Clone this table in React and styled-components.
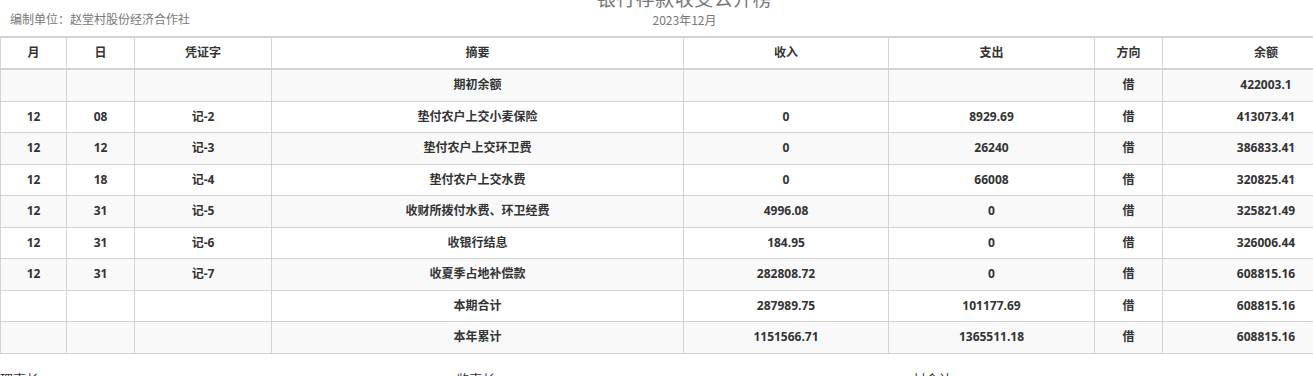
import styled, { createGlobalStyle } from 'styled-components';

const GlobalStyle = createGlobalStyle`
  body {
    margin: 0;
    background: #fff;
    overflow: hidden;
    font-family: "Open Sans", "Noto Sans CJK SC", sans-serif;
    color: #333;
  }
`;

// 页面比窗口宽一些，右边会被裁掉
const Page = styled.div`
  width: 1369px;
`;

const Header = styled.div`
  display: grid;
  grid-template-columns: 1fr auto 1fr;
  align-items: end;
  height: 36px;
`;

const Unit = styled.div`
  padding: 0 0 9px 10px;
  font-size: 12px;
  line-height: 16px;
  color: #777;
  font-family: "Noto Sans CJK SC", sans-serif;
`;

const TitleBox = styled.div`
  display: flex;
  flex-direction: column;
  align-items: center;
  align-self: start;
  margin-top: -14px;
`;

const Title = styled.div`
  font-size: 19px;
  line-height: 24px;
  color: #777;
  letter-spacing: 0.5px;
  font-family: "Noto Sans CJK SC", sans-serif;
`;

const SubTitle = styled.div`
  margin-top: 2px;
  font-size: 12px;
  line-height: 16px;
  color: #777;
  font-family: "Noto Sans CJK SC", sans-serif;
`;

const Table = styled.table`
  width: 1369px;
  table-layout: fixed;
  border-collapse: collapse;
  font-size: 12px;
`;

const Th = styled.th`
  padding: 7px 8px 8px;
  line-height: 15px;
  font-weight: bold;
  color: #333;
  text-align: center;
  border: 1px solid #d3d3d3;
  border-top-width: 2px;
  border-bottom-width: 2px;
`;

const Tr = styled.tr`
  background: ${(props) => (props.striped ? '#f9f9f9' : '#fff')};
`;

const Td = styled.td`
  padding: 8px 8px;
  height: 14.5px;
  line-height: 14.5px;
  font-weight: bold;
  color: #333;
  text-align: center;
  border: 1px solid #d3d3d3;
  white-space: nowrap;
`;

const Signs = styled.div`
  display: grid;
  grid-template-columns: repeat(3, 1fr);
  margin-top: 16px;
  font-size: 13px;
  line-height: 18px;
  color: #333;
  font-family: "Noto Sans CJK SC", sans-serif;
`;

const Sign = styled.div`
  padding-left: ${(props) => props.pad || 0}px;
`;

const widths = [66, 68, 137, 412, 205, 206, 68, 207];
const heads = ['月', '日', '凭证字', '摘要', '收入', '支出', '方向', '余额'];

const rows = [
  ['', '', '', '期初余额', '', '', '借', '422003.1'],
  ['12', '08', '记-2', '垫付农户上交小麦保险', '0', '8929.69', '借', '413073.41'],
  ['12', '12', '记-3', '垫付农户上交环卫费', '0', '26240', '借', '386833.41'],
  ['12', '18', '记-4', '垫付农户上交水费', '0', '66008', '借', '320825.41'],
  ['12', '31', '记-5', '收财所拨付水费、环卫经费', '4996.08', '0', '借', '325821.49'],
  ['12', '31', '记-6', '收银行结息', '184.95', '0', '借', '326006.44'],
  ['12', '31', '记-7', '收夏季占地补偿款', '282808.72', '0', '借', '608815.16'],
  ['', '', '', '本期合计', '287989.75', '101177.69', '借', '608815.16'],
  ['', '', '', '本年累计', '1151566.71', '1365511.18', '借', '608815.16'],
];

function App() {
  return (
    <Page>
      <GlobalStyle />
      <Header>
        <Unit>编制单位：赵堂村股份经济合作社</Unit>
        <TitleBox>
          <Title>银行存款收支公开榜</Title>
          <SubTitle>2023年12月</SubTitle>
        </TitleBox>
        <div />
      </Header>
      <Table>
        <colgroup>
          {widths.map((w, i) => (
            <col key={i} style={{ width: w }} />
          ))}
        </colgroup>
        <thead>
          <tr>
            {heads.map((h) => (
              <Th key={h}>{h}</Th>
            ))}
          </tr>
        </thead>
        <tbody>
          {rows.map((r, i) => (
            <Tr key={i} striped={i % 2 === 0}>
              {r.map((c, j) => (
                <Td key={j}>{c}</Td>
              ))}
            </Tr>
          ))}
        </tbody>
      </Table>
      <Signs>
        <Sign>理事长：</Sign>
        <Sign>监事长：</Sign>
        <Sign>村会计：</Sign>
      </Signs>
    </Page>
  );
}

export default App;
